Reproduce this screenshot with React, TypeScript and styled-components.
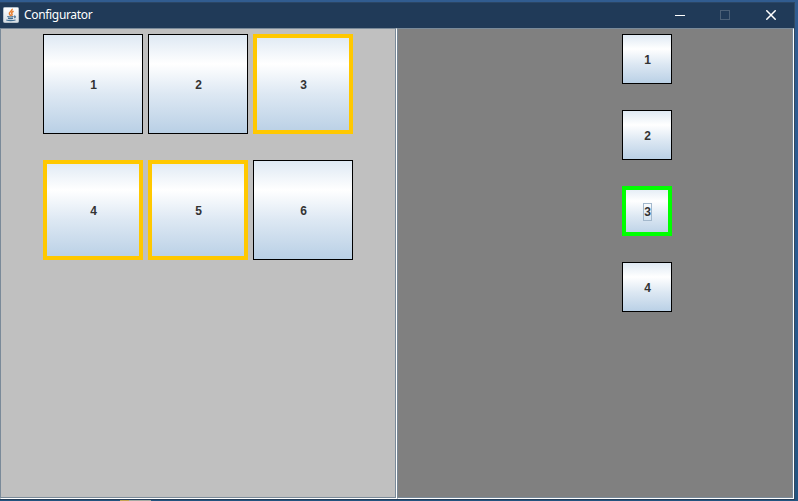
import React from 'react';
import styled, { createGlobalStyle } from 'styled-components';

const Global = createGlobalStyle`
  * { box-sizing: border-box; }
  body { margin: 0; overflow: hidden; background: #2b5a8c; }
`;

const Desktop = styled.div`
  width: 798px;
  height: 501px;
  display: flex;
  flex-direction: column;
  background: linear-gradient(#315c90, #2a5b91 50%, #235480);
`;

const Frame = styled.div`
  width: 795px;
  height: 498px;
  margin-top: 2px;
  display: flex;
  flex-direction: column;
  background: #203a58;
  border-top: 1px solid #2b4665;
  border-right: 1px solid #334960;
  border-bottom: 1px solid #233c58;
`;

const TitleBar = styled.header`
  height: 25px;
  flex: none;
  display: flex;
  align-items: center;
  padding-left: 3px;
  color: #fff;
  background: #203a58;
  & > svg { margin-top: -1px; }
`;

const Title = styled.span`
  flex: 1;
  margin-left: 5px;
  padding-bottom: 1px;
  font: 12px/16px 'Noto Sans', 'Open Sans', sans-serif;
  letter-spacing: -0.33px;
`;

const Control = styled.div`
  width: 46px;
  height: 25px;
  padding-top: 7px;
  display: flex;
  align-items: flex-start;
  justify-content: center;
  color: #fff;
`;

const DisabledControl = styled(Control)`
  width: 45px;
  padding-right: 1px;
  color: #4b6077;
`;

const Content = styled.main`
  width: 794px;
  height: 471px;
  display: flex;
`;

const Etched = styled.section<{ $bg: string }>`
  width: 397px;
  height: 471px;
  background: ${p => p.$bg};
  border: 1px solid #7a8a99;
  border-right-color: #fff;
  border-bottom-color: #fff;
  box-shadow: inset -1px -1px #7a8a99;
`;

const LeftGrid = styled.div`
  display: grid;
  grid-template-columns: repeat(3, 100px);
  column-gap: 5px;
  row-gap: 26px;
  padding: 5px 0 0 42px;
`;

const RightColumn = styled.div`
  display: flex;
  flex-direction: column;
  gap: 26px;
  padding: 5px 0 0 224px;
`;

const Tile = styled.button<{ $size: number; $mark?: string }>`
  width: ${p => p.$size}px;
  height: ${p => p.$size}px;
  margin: 0;
  padding: 1px 0 0;
  display: flex;
  align-items: center;
  justify-content: center;
  border: ${p => (p.$mark ? `4px solid ${p.$mark}` : '1px solid #000')};
  border-radius: 0;
  background: linear-gradient(#dde8f3, #fff 30%, #dde8f3 60%, #b8cfe5) border-box;
  color: #333;
  font: bold 12px/14px 'Liberation Sans', Arial, sans-serif;
`;

const Label = styled.span<{ $focus?: boolean }>`
  width: 9px;
  height: 18px;
  display: flex;
  align-items: center;
  justify-content: flex-end;
  padding-right: 0.6px;
  outline: ${p => (p.$focus ? '1px solid #a3b8cc' : 'none')};
  outline-offset: -1px;
`;

const JavaIcon = () => (
  <svg width="16" height="16" viewBox="0 0 16 16">
    <defs>
      <linearGradient id="tile" x2="0" y2="1">
        <stop stopColor="#ffffff" />
        <stop offset="1" stopColor="#d5dde4" />
      </linearGradient>
    </defs>
    <rect x="0.5" y="0.5" width="15" height="15" rx="1" fill="url(#tile)" stroke="#b5c1ca" />
    <path d="M9.2 1.8C9.8 4.3 5 5 6.5 7.2L8 9M10.6 4.3C7.8 5.5 8.6 6.4 9.1 7.3 9.3 7.9 8.7 8.4 8.4 8.8" fill="none" stroke="#e67c2c" strokeWidth="1.5" />
    <path d="M4.3 9.5Q7.5 10.5 10.5 9.5M5 11.4Q7.5 12 10 11.4M11 9.2Q13.4 9 11.4 11M3.3 13Q7.5 14.2 12.5 13" fill="none" stroke="#416d90" strokeWidth="1.2" />
  </svg>
);

const yellow = '#ffc800';
const green = '#00ff00';
const leftTiles = [{ n: 1 }, { n: 2 }, { n: 3, mark: yellow }, { n: 4, mark: yellow }, { n: 5, mark: yellow }, { n: 6 }];
const rightTiles = [{ n: 1 }, { n: 2 }, { n: 3, mark: green, focus: true }, { n: 4 }];

const Taskbar = styled.div`
  width: 31px;
  height: 1px;
  margin-left: 120px;
  background: linear-gradient(90deg, #c5a553 30%, #a6aaa3 30%);
`;

export default function App() {
  return (
    <Desktop>
      <Global />
      <Frame>
        <TitleBar>
          <JavaIcon />
          <Title>Configurator</Title>
          <Control>
            <svg width="10" height="10"><path d="M0 5.5H10" stroke="currentColor" /></svg>
          </Control>
          <DisabledControl>
            <svg width="10" height="10" shapeRendering="crispEdges"><rect x="0.5" y="0.5" width="9" height="9" fill="none" stroke="currentColor" /></svg>
          </DisabledControl>
          <Control>
            <svg width="10" height="10"><path d="M0.3 0.3L9.7 9.7M9.7 0.3L0.3 9.7" stroke="currentColor" strokeWidth="1.5" /></svg>
          </Control>
        </TitleBar>
        <Content>
          <Etched $bg="#c0c0c0">
            <LeftGrid>
              {leftTiles.map(t => (
                <Tile key={t.n} $size={100} $mark={t.mark}><Label>{t.n}</Label></Tile>
              ))}
            </LeftGrid>
          </Etched>
          <Etched $bg="#808080">
            <RightColumn>
              {rightTiles.map(t => (
                <Tile key={t.n} $size={50} $mark={t.mark}><Label $focus={t.focus}>{t.n}</Label></Tile>
              ))}
            </RightColumn>
          </Etched>
        </Content>
      </Frame>
      <Taskbar />
    </Desktop>
  );
}
